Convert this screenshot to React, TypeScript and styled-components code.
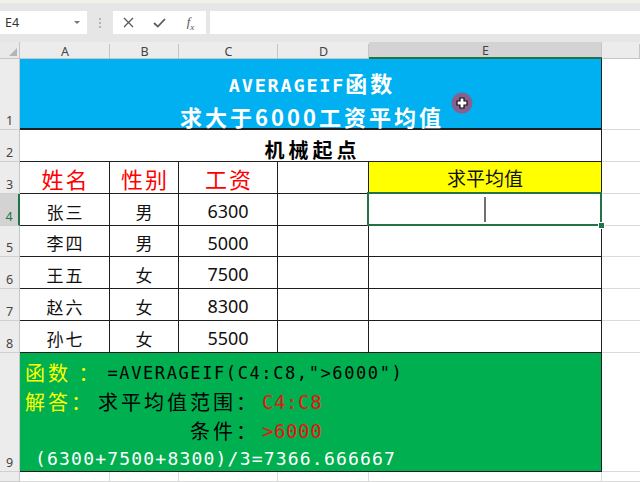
import React from 'react';
import styled, { createGlobalStyle } from 'styled-components';

const GlobalStyle = createGlobalStyle`
  html, body { margin: 0; padding: 0; background: #fff; }
  body { font-family: "Noto Sans", "Noto Sans CJK SC", sans-serif; overflow: hidden; }
  #root { width: 640px; height: 482px; }
`;

const CJK = `"Noto Sans CJK SC", "Noto Sans", sans-serif`;
const MONO = `"DejaVu Sans Mono", "Liberation Mono", monospace`;
const DARK = '#1e1e1e';
const LIGHT = '#dadada';
const GREEN_SEL = '#217346';

const Frame = styled.div`
  width: 640px;
  height: 482px;
  overflow: hidden;
  display: flex;
  flex-direction: column;
  background: #e6e6e6;
`;

const Ribbon = styled.div`
  height: 8px;
  border-top: 3px solid #f3f2ea;
  background: #e6e6e6;
`;

const FormulaBar = styled.div`
  height: 23px;
  display: flex;
  background: #e6e6e6;
`;

const NameBox = styled.div`
  width: 87px;
  box-sizing: border-box;
  background: #fff;
  display: flex;
  align-items: center;
  justify-content: space-between;
  padding: 0 7px 0 5px;
  font: 12.5px "Noto Sans", sans-serif;
  color: #333;
`;

const DropArrow = styled.span`
  width: 0;
  height: 0;
  border-left: 3px solid transparent;
  border-right: 3px solid transparent;
  border-top: 3px solid #777;
`;

const Grip = styled.div`
  width: 26px;
  display: flex;
  align-items: center;
  justify-content: center;
`;

const GripDots = styled.span`
  width: 2px;
  height: 10px;
  background: repeating-linear-gradient(#b4b4b4 0 2px, transparent 2px 4px);
`;

const FxBox = styled.div`
  width: 93px;
  background: #fff;
  display: grid;
  grid-template-columns: repeat(3, 31px);
  align-items: center;
  justify-items: center;
  color: #555;
`;

const FxText = styled.span`
  font: italic 13px "Liberation Serif", serif;
  color: #555;
  sub { font-size: 9px; }
`;

const FormulaInput = styled.div`
  flex: 1;
  margin-left: 4px;
  background: #fff;
`;

const BarGap = styled.div`
  height: 8px;
  background: #e6e6e6;
`;

const Sheet = styled.div`
  flex: 1;
  display: grid;
  grid-template-columns: 20px 90px 69px 99px 91px 233px 1fr;
  grid-template-rows: 17px 71px 32px 32px 32px 31px 32px 32px 32px 119px 1fr;
  background: #fff;
`;

const Corner = styled.div`
  background: #e9e9e9;
  border-bottom: 1px solid #c6c6c6;
  border-right: 1px solid #c6c6c6;
  box-sizing: border-box;
  display: flex;
  align-items: flex-end;
  justify-content: flex-end;
  padding: 0 2px 2px 0;
`;

const ColHeader = styled.div<{ $selected?: boolean }>`
  box-sizing: border-box;
  background: linear-gradient(#c6c6c6, #c6c6c6) right bottom / 1px 14px no-repeat,
    ${(p) => (p.$selected ? '#d3d3d3' : '#ececec')};
  border-bottom: ${(p) => (p.$selected ? `2px solid ${GREEN_SEL}` : '1px solid #c6c6c6')};
  display: flex;
  align-items: center;
  justify-content: center;
  padding-top: 2px;
  font: 12.5px "Noto Sans", sans-serif;
  color: #444;
`;

const RowHeader = styled.div<{ $selected?: boolean }>`
  box-sizing: border-box;
  background: ${(p) => (p.$selected ? '#d3d3d3' : '#ececec')};
  border-right: ${(p) => (p.$selected ? `2px solid ${GREEN_SEL}` : '1px solid #c6c6c6')};
  border-bottom: 1px solid #d0d0d0;
  display: flex;
  align-items: flex-end;
  justify-content: center;
  padding-bottom: 1px;
  font: 12.5px/14px "Noto Sans", sans-serif;
  color: ${(p) => (p.$selected ? GREEN_SEL : '#444')};
`;

const Cell = styled.div<{ $span?: number; $fill?: string; $dark?: boolean }>`
  box-sizing: border-box;
  grid-column: span ${(p) => p.$span ?? 1};
  background: ${(p) => p.$fill ?? '#fff'};
  border-right: 1px solid ${(p) => (p.$dark ? DARK : LIGHT)};
  border-bottom: 1px solid ${(p) => (p.$dark ? DARK : LIGHT)};
  display: flex;
  align-items: center;
  justify-content: center;
  min-width: 0;
  white-space: nowrap;
`;

const EdgeCell = styled(Cell)`
  border-right: none;
`;

const TitleCell = styled(Cell)`
  position: relative;
  flex-direction: column;
  justify-content: flex-start;
  padding-top: 8px;
  border-bottom-width: 2px;
`;

const TitleLine = styled.div`
  font-family: ${CJK};
  font-size: 22px;
  font-weight: 700;
  letter-spacing: 3px;
  padding-left: 3px;
  line-height: 31px;
  color: #fff;
`;

const TitleLatin = styled.span`
  font-family: ${MONO};
  font-size: 18.5px;
  letter-spacing: 1.8px;
`;

const CursorMark = styled.svg`
  position: absolute;
  left: 431px;
  top: 33px;
`;

const BannerCell = styled(Cell)`
  padding-top: 7px;
  font-family: ${CJK};
  font-size: 20px;
  font-weight: 700;
  letter-spacing: 4px;
  padding-left: 4px;
  color: #000;
`;

const HeadCell = styled(Cell)`
  font-family: ${CJK};
  font-size: 22px;
  letter-spacing: 2px;
  padding-left: 2px;
  color: #ff0000;
`;

const AvgHeadCell = styled(Cell)`
  font-family: ${CJK};
  font-size: 19px;
  color: #111;
`;

const DataCell = styled(Cell)<{ $num?: boolean; $spaced?: boolean }>`
  padding-top: 3px;
  font-family: ${(p) => (p.$num ? `"Noto Sans", sans-serif` : CJK)};
  font-size: ${(p) => (p.$num ? '18px' : '17px')};
  letter-spacing: ${(p) => (p.$spaced ? '2px' : '0')};
  padding-left: ${(p) => (p.$spaced ? '2px' : '0')};
  color: #111;
`;

const ActiveCell = styled(Cell)`
  position: relative;
  &::after {
    content: '';
    position: absolute;
    left: -2px;
    top: -2px;
    right: -1px;
    bottom: -1px;
    border: 2px solid ${GREEN_SEL};
    pointer-events: none;
  }
  &::before {
    content: '';
    position: absolute;
    right: -4px;
    bottom: -4px;
    width: 5px;
    height: 5px;
    background: ${GREEN_SEL};
    border: 1px solid #fff;
    z-index: 2;
  }
`;

const Caret = styled.span`
  width: 2px;
  height: 25px;
  background: #707070;
`;

const NoteCell = styled(Cell)`
  flex-direction: column;
  align-items: stretch;
  justify-content: flex-start;
  padding: 5px 0 0 5px;
  border-top: 0;
`;

const NoteLine = styled.div`
  height: 29px;
  display: flex;
  align-items: center;
  white-space: pre;
`;

const NoteGrid = styled.div`
  height: 29px;
  display: grid;
  grid-template-columns: 72px 162px auto;
  align-items: center;
  white-space: pre;
`;

const Kai = styled.span<{ $color: string }>`
  font-family: ${CJK};
  font-size: 20px;
  letter-spacing: 3px;
  color: ${(p) => p.$color};
`;

const KeyText = styled(Kai)`
  justify-self: end;
`;

const Code = styled.span<{ $color: string; $size: number; $gap: number; $indent?: number }>`
  font-family: ${MONO};
  font-size: ${(p) => p.$size}px;
  letter-spacing: ${(p) => p.$gap}px;
  margin-left: ${(p) => p.$indent ?? 0}px;
  color: ${(p) => p.$color};
`;

const CornerTriangle = () => (
  <svg width="8" height="8" viewBox="0 0 8 8">
    <polygon points="8,0 8,8 0,8" fill="#b5b5b5" />
  </svg>
);

const CrossIcon = () => (
  <svg width="11" height="11" viewBox="0 0 11 11">
    <path d="M1 1 L10 10 M10 1 L1 10" stroke="#5a5a5a" strokeWidth="1.3" fill="none" />
  </svg>
);

const CheckIcon = () => (
  <svg width="13" height="10" viewBox="0 0 13 10">
    <path d="M1 5 L4.8 8.6 L12 1" stroke="#5a5a5a" strokeWidth="1.8" fill="none" />
  </svg>
);

const people = [
  { name: '张三', gender: '男', pay: '6300' },
  { name: '李四', gender: '男', pay: '5000' },
  { name: '王五', gender: '女', pay: '7500' },
  { name: '赵六', gender: '女', pay: '8300' },
  { name: '孙七', gender: '女', pay: '5500' },
];

export default function App() {
  return (
    <>
      <GlobalStyle />
      <Frame>
        <Ribbon />
        <FormulaBar>
          <NameBox>
            <span>E4</span>
            <DropArrow />
          </NameBox>
          <Grip>
            <GripDots />
          </Grip>
          <FxBox>
            <CrossIcon />
            <CheckIcon />
            <FxText>
              f<sub>x</sub>
            </FxText>
          </FxBox>
          <FormulaInput />
        </FormulaBar>
        <BarGap />
        <Sheet>
          <Corner>
            <CornerTriangle />
          </Corner>
          <ColHeader>A</ColHeader>
          <ColHeader>B</ColHeader>
          <ColHeader>C</ColHeader>
          <ColHeader>D</ColHeader>
          <ColHeader $selected>E</ColHeader>
          <ColHeader />

          <RowHeader>1</RowHeader>
          <TitleCell $span={5} $fill="#00b0f0" $dark>
            <TitleLine>
              <TitleLatin>AVERAGEIF</TitleLatin>函数
            </TitleLine>
            <TitleLine>求大于6000工资平均值</TitleLine>
            <CursorMark width="22" height="22" viewBox="0 0 22 22">
              <circle cx="11" cy="11" r="10.5" fill="#86608f" />
              <polygon
                points="9,6 13,6 13,9 16,9 16,13 13,13 13,16 9,16 9,13 6,13 6,9 9,9"
                fill="#fff"
                stroke="#111"
                strokeWidth="1.2"
              />
            </CursorMark>
          </TitleCell>
          <EdgeCell />

          <RowHeader>2</RowHeader>
          <BannerCell $span={5} $dark>
            机械起点
          </BannerCell>
          <EdgeCell />

          <RowHeader>3</RowHeader>
          <HeadCell $dark>姓名</HeadCell>
          <HeadCell $dark>性别</HeadCell>
          <HeadCell $dark>工资</HeadCell>
          <Cell $dark />
          <AvgHeadCell $dark $fill="#ffff00">
            求平均值
          </AvgHeadCell>
          <EdgeCell />

          {people.map((p, i) => (
            <React.Fragment key={p.name}>
              <RowHeader $selected={i === 0}>{i + 4}</RowHeader>
              <DataCell $dark $spaced>
                {p.name}
              </DataCell>
              <DataCell $dark>{p.gender}</DataCell>
              <DataCell $dark $num>
                {p.pay}
              </DataCell>
              <Cell $dark />
              {i === 0 ? (
                <ActiveCell $dark>
                  <Caret />
                </ActiveCell>
              ) : (
                <Cell $dark />
              )}
              <EdgeCell />
            </React.Fragment>
          ))}

          <RowHeader>9</RowHeader>
          <NoteCell $span={5} $dark $fill="#00b050">
            <NoteLine>
              <Kai $color="#ffff00">函数 ：</Kai>
              <Code $color="#000" $size={17} $gap={1.6} $indent={6}>
                =AVERAGEIF(C4:C8,"&gt;6000")
              </Code>
            </NoteLine>
            <NoteGrid>
              <Kai $color="#ffff00">解答：</Kai>
              <KeyText $color="#000">求平均值范围：</KeyText>
              <Code $color="#e8140f" $size={19} $gap={0.6} $indent={3}>
                C4:C8
              </Code>
            </NoteGrid>
            <NoteGrid>
              <span />
              <KeyText $color="#000">条件：</KeyText>
              <Code $color="#e8140f" $size={19} $gap={0.6} $indent={3}>
                &gt;6000
              </Code>
            </NoteGrid>
            <NoteLine>
              <Code $color="#fff" $size={18} $gap={1.2} $indent={10}>
                (6300+7500+8300)/3=7366.666667
              </Code>
            </NoteLine>
          </NoteCell>
          <EdgeCell />

          <RowHeader />
          <Cell />
          <Cell />
          <Cell />
          <Cell />
          <Cell />
          <EdgeCell />
        </Sheet>
      </Frame>
    </>
  );
}
